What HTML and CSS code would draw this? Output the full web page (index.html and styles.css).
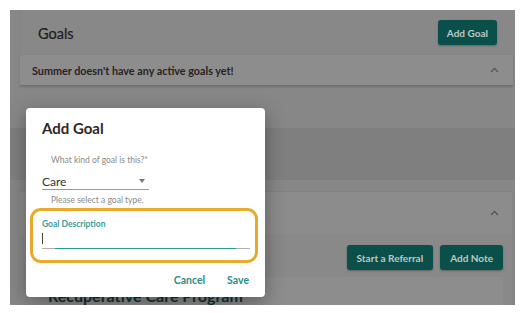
FILE: index.html
```html
<!DOCTYPE html>
<html lang="en">

<head>
    <meta charset="UTF-8">
    <title>Add Goal</title>
    <link rel="stylesheet" href="styles.css">
</head>

<body>
    <div class="frame">
        <div class="card goals-card">
            <div class="goals-header">
                <h2 class="section-title">Goals</h2>
                <button class="btn">Add Goal</button>
            </div>
            <div class="accordion-row">
                <span class="empty-text">Summer doesn't have any active goals yet!</span>
                <svg class="chevron" width="9" height="6" viewBox="0 0 9 6">
                    <polyline points="1,5 4.5,1.5 8,5" fill="none" stroke="#555" stroke-width="1.3" />
                </svg>
            </div>
        </div>

        <div class="band"></div>

        <div class="card program-card">
            <div class="program-header">
                <svg class="chevron" width="9" height="6" viewBox="0 0 9 6">
                    <polyline points="1,5 4.5,1.5 8,5" fill="none" stroke="#555" stroke-width="1.3" />
                </svg>
            </div>
            <div class="program-body">
                <div class="actions-row">
                    <button class="btn">Start a Referral</button>
                    <button class="btn">Add Note</button>
                </div>
                <div class="inner-card">
                    <h3 class="program-title">Recuperative Care Program</h3>
                </div>
            </div>
        </div>

        <!-- modal -->
        <div class="dialog">
            <h2 class="dialog-title">Add Goal</h2>

            <div class="field-label">What kind of goal is this?*</div>
            <div class="select">
                <span>Care</span>
                <span class="select-arrow"></span>
            </div>
            <div class="helper">Please select a goal type.</div>

            <div class="highlight">
                <div class="input-label">Goal Description</div>
                <div class="input">
                    <span class="caret"></span>
                    <span class="focus-line"></span>
                </div>
            </div>

            <div class="dialog-actions">
                <button class="text-btn">Cancel</button>
                <button class="text-btn">Save</button>
            </div>
        </div>
    </div>
</body>

</html>
```

FILE: styles.css
```css
* {
    margin: 0;
    padding: 0;
    box-sizing: border-box;
}

body {
    font-family: Lato, "Noto Sans", sans-serif;
    background: #fff;
    padding: 10px 8px 8px 10px;
}

.frame {
    position: relative;
    width: 505px;
    height: 295px;
    overflow: hidden;
    background: #878787;
}

.card {
    margin: 0 2px 0 10px;
}

.goals-header {
    display: flex;
    justify-content: space-between;
    align-items: center;
    height: 45px;
    padding: 0 16px 0 17px;
    background: #888;
    border-left: 1px solid #838383;
}

.section-title {
    font-size: 14.5px;
    font-weight: 400;
    color: #1c1c1c;
    padding-top: 1px;
    -webkit-text-stroke: 0.2px #1c1c1c;
}

.btn {
    font-family: inherit;
    font-size: 10px;
    font-weight: 700;
    color: #bcc9c7;
    background: #0b4f4a;
    border: none;
    border-radius: 3px;
    height: 25px;
    padding: 0 9px;
    box-shadow: 0 1px 2px rgba(0, 0, 0, 0.3);
}

.accordion-row {
    display: flex;
    justify-content: space-between;
    align-items: center;
    height: 31px;
    padding: 0 14px 0 12px;
    background: #8d8d8d;
    border-bottom: 1px solid #707070;
    box-shadow: 0 1px 2px rgba(0, 0, 0, 0.15);
}

.empty-text {
    font-size: 10.8px;
    font-weight: 700;
    color: #2a1f1f;
}

.chevron {
    display: block;
}

.band {
    height: 52px;
    margin-top: 42px;
    background: #7f7f7f;
}

.program-card {
    margin-top: 11px;
    border-top: 1px solid #828282;
    border-right: 1px solid #828282;
}

.program-header {
    display: flex;
    justify-content: flex-end;
    align-items: center;
    height: 42px;
    padding-right: 13px;
    background: #8c8c8c;
}

.program-body {
    background: #898989;
    padding: 11px 9px 0 10px;
}

.actions-row {
    display: flex;
    justify-content: flex-end;
    gap: 7px;
}

.actions-row .btn {
    padding: 0 10px;
}

.inner-card {
    margin-top: 7px;
    background: #8d8d8d;
    padding: 9px 18px 0;
    height: 40px;
}

.program-title {
    font-size: 16px;
    font-weight: 700;
    color: #0f3533;
}

.dialog {
    position: absolute;
    left: 16px;
    top: 98px;
    width: 239px;
    height: 189px;
    background: #fff;
    border-radius: 4px;
    box-shadow: 0 6px 20px rgba(0, 0, 0, 0.35);
    padding: 10px 16px 0;
}

.dialog-title {
    font-size: 15px;
    line-height: 20px;
    font-weight: 700;
    color: #332626;
    margin-bottom: 16px;
}

.field-label,
.helper {
    font-size: 8.5px;
    line-height: 12px;
    color: #8a8a8a;
    padding-left: 9px;
}

.select {
    display: flex;
    justify-content: space-between;
    align-items: center;
    width: 107px;
    height: 17px;
    margin-top: 7px;
    padding-right: 4px;
    font-size: 12px;
    color: #333;
    border-bottom: 1px solid #999;
}

.select-arrow {
    width: 0;
    height: 0;
    border-left: 3.5px solid transparent;
    border-right: 3.5px solid transparent;
    border-top: 4px solid #777;
}

.helper {
    margin-top: 4px;
}

.highlight {
    margin: 2px -9px 0 -12px;
    height: 55px;
    border: 3px solid #e9a92b;
    border-radius: 11px;
    padding: 7px 5px 0 9px;
}

.input-label {
    font-size: 8.5px;
    line-height: 12px;
    font-weight: 700;
    color: #3b9d97;
}

.input {
    position: relative;
    height: 18px;
    margin-top: 1px;
    border-bottom: 1px solid #b0b0b0;
}

.caret {
    position: absolute;
    left: 0;
    top: 2px;
    width: 1px;
    height: 11px;
    background: #444;
}

.focus-line {
    position: absolute;
    left: 13px;
    right: 14px;
    bottom: -1px;
    height: 1.5px;
    background: #2a9d8f;
}

.dialog-actions {
    display: flex;
    justify-content: flex-end;
    gap: 22px;
    margin-top: 10px;
}

.text-btn {
    font-family: inherit;
    font-size: 10.5px;
    line-height: 14px;
    font-weight: 700;
    color: #2b8c86;
    background: none;
    border: none;
}
```
